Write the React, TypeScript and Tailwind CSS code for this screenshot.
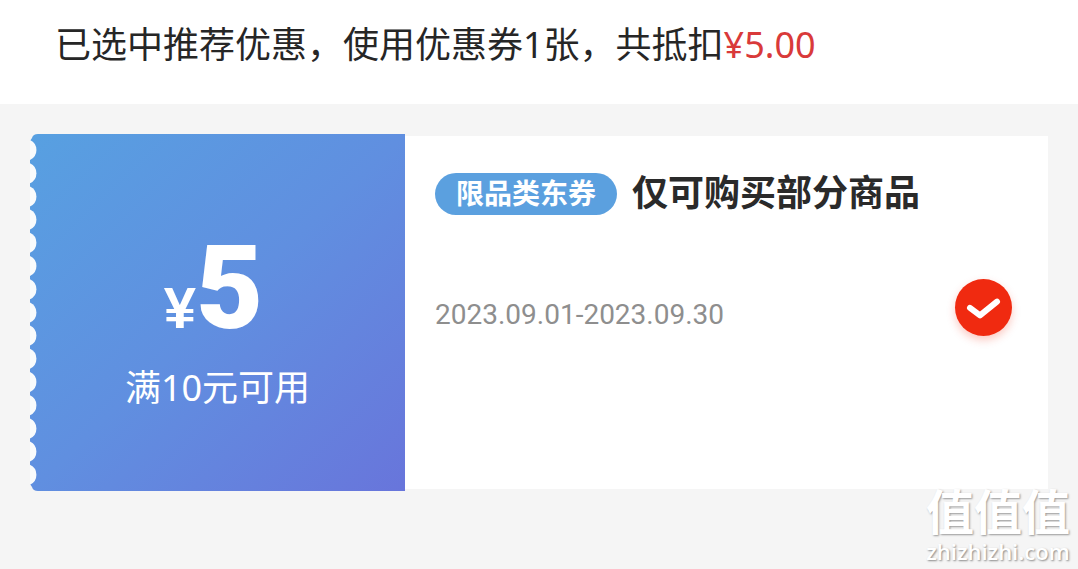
import React, { useState } from "react";

const NOTCH_COUNT = 15;
const NOTCH_PITCH = 23.2;
const FIRST_NOTCH = 16;

/** Perforated strip along the left side of the coupon face. */
function TicketEdge() {
  const centers = Array.from({ length: NOTCH_COUNT }, (_, i) => FIRST_NOTCH + i * NOTCH_PITCH);
  return (
    <svg
      className="absolute left-0 top-0 h-full w-2"
      viewBox="0 0 8 357"
      preserveAspectRatio="none"
      aria-hidden="true"
    >
      <path d="M0 0H8Q3 0 2 4L0 7Z" fill="#f5f5f5" />
      <path d="M0 357H8Q3 357 2 353L0 350Z" fill="#f5f5f5" />
      {centers.map((cy) => (
        <path key={cy} d={`M0 ${cy - 10}A11 11 0 0 1 0 ${cy + 10}Z`} fill="#f9fbfc" />
      ))}
    </svg>
  );
}

function CouponFace() {
  return (
    <div className="relative -my-0.5 flex w-[375px] shrink-0 flex-col items-center bg-linear-to-br from-[#57a0e1] via-[#608fe0] to-[#6875db] pt-[94px] text-white">
      <TicketEdge />
      <p className="flex items-baseline pr-2 leading-[120px]">
        <span className="font-['Liberation_Sans',sans-serif] text-[58px] font-bold">¥</span>
        <span className="font-['Roboto',sans-serif] text-[116px] font-black">5</span>
      </p>
      <p className="-mt-2 text-4xl leading-[56px]">满10元可用</p>
    </div>
  );
}

function SelectBox({ id }: { id: string }) {
  const [checked, setChecked] = useState(true);
  return (
    <span className="relative block size-[57px] shrink-0">
      <input
        id={id}
        type="checkbox"
        checked={checked}
        onChange={(e) => setChecked(e.target.checked)}
        className="block size-full cursor-pointer appearance-none rounded-full border-2 border-gray-300 bg-white checked:border-0 checked:bg-[#f02a10] checked:shadow-[0_4px_8px_rgba(240,42,16,0.25)]"
      />
      {checked && (
        <svg className="pointer-events-none absolute inset-0 size-full" viewBox="0 0 57 57" aria-hidden="true">
          <path
            d="M15 28.8L25 36.3L42 22.6"
            fill="none"
            stroke="#fff"
            strokeWidth="6"
            strokeLinecap="round"
            strokeLinejoin="round"
          />
        </svg>
      )}
    </span>
  );
}

function Coupon() {
  return (
    <article className="flex min-h-[353px] bg-white">
      <CouponFace />
      <div className="min-w-0 flex-1 pt-[37px] pr-9 pl-[30px]">
        <div className="flex items-center gap-[15px]">
          <span className="rounded-full bg-[#5ba0df] px-[21px] pb-0.5 text-[28px] leading-10 font-bold whitespace-nowrap text-white">
            限品类东券
          </span>
          <h2 className="pb-0.5 text-4xl leading-[38px] font-bold whitespace-nowrap text-[#2a2a2a]">仅可购买部分商品</h2>
        </div>
        <div className="mt-16 flex items-center justify-between">
          <label
            htmlFor="coupon-5"
            className="mt-[14px] font-['Roboto',sans-serif] text-[28px] leading-9 text-[#8e8e8e]"
          >
            2023.09.01-2023.09.30
          </label>
          <SelectBox id="coupon-5" />
        </div>
      </div>
    </article>
  );
}

function Watermark() {
  return (
    <div className="pointer-events-none absolute right-2 bottom-1 text-center text-white">
      <p className="text-5xl leading-[50px] font-bold [text-shadow:1px_1px_2px_#999]">值值值</p>
      <p className="font-['Open_Sans',sans-serif] text-[22px] leading-7 font-semibold [text-shadow:1px_1px_2px_#888]">
        zhizhizhi.com
      </p>
    </div>
  );
}

export default function App() {
  return (
    <main
      lang="zh-CN"
      className="relative flex min-h-screen flex-col bg-[#f5f5f5] font-['Noto_Sans','Noto_Sans_CJK_SC',sans-serif]"
    >
      <header className="bg-white px-[55px] pt-[19px] pb-[33px]">
        <h1 className="text-4xl leading-[52px] font-normal text-[#262626]">
          已选中推荐优惠，使用优惠券1张，共抵扣<span className="text-[#d93a3a]">¥5.00</span>
        </h1>
      </header>
      <section className="px-[30px] py-8">
        <Coupon />
      </section>
      <Watermark />
    </main>
  );
}
